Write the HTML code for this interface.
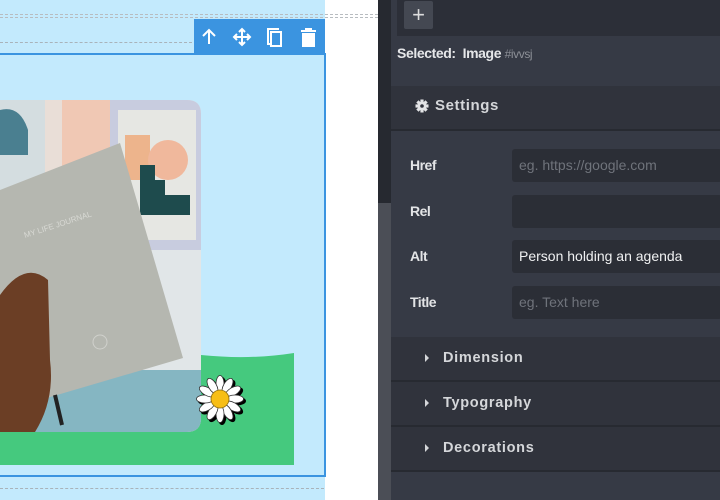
<!DOCTYPE html>
<html><head><style>
body{margin:0;width:720px;height:500px;overflow:hidden;background:#fff;font-family:"Liberation Sans",sans-serif;position:relative}
.a{position:absolute}
.lbl{position:absolute;left:410px;color:#e3e4e6;font-size:14px;font-weight:bold;letter-spacing:-0.5px}
.inp{position:absolute;left:512px;width:210px;height:33px;background:#2b2e36;border-radius:3px;font-size:14px;line-height:33px;padding-left:7px;box-sizing:border-box;color:#6f737b}
.sec{position:absolute;left:391px;width:329px;height:43px;background:#30333c;border-bottom:2px solid #272a31;color:#d5d7da;font-size:14.5px;font-weight:bold;letter-spacing:0.7px;line-height:43px}
.sec span{position:absolute;left:52px}
.sec i{position:absolute;left:34px;top:17px;border-left:4px solid #d5d7da;border-top:4px solid transparent;border-bottom:4px solid transparent}
</style></head><body>
<div class="a" style="left:0;top:0;width:325px;height:500px;background:#c3eafd"></div>
<div class="a" style="left:0;top:14px;width:378px;border-top:1px dashed #b8bcc0"></div>
<div class="a" style="left:0;top:17px;width:378px;border-top:1px dashed #b8bcc0"></div>
<div class="a" style="left:0;top:42px;width:192px;border-top:1px dashed #a9b3ba"></div>
<div class="a" style="left:0;top:488px;width:324px;border-top:1px dashed #a9b3ba"></div>
<div class="a" style="left:-2px;top:53px;width:328px;height:424px;border:2px solid #3b94e0;border-left:none;box-sizing:border-box"></div>
<svg class="a" style="left:0;top:100px" width="300" height="370">
<path d="M0 255 L201 255 Q250 260 294 253 L294 365 L0 365Z" fill="#45c97e"/>
<defs><clipPath id="c"><path d="M0 0 H187 Q201 0 201 14 V318 Q201 332 187 332 H0Z"/></clipPath></defs>
<g clip-path="url(#c)">
<rect width="201" height="332" fill="#e9ded7"/>
<rect x="0" y="0" width="45" height="170" fill="#d4dde0"/>
<rect x="62" y="0" width="50" height="120" fill="#f0c8b4"/>
<rect x="110" y="0" width="91" height="150" fill="#c8ccdf"/>
<rect x="118" y="10" width="78" height="130" fill="#e6e7e3"/>
<rect x="125" y="35" width="25" height="45" fill="#edb48c"/>
<circle cx="168" cy="60" r="20" fill="#f0b89c"/>
<path d="M140 65 H155 V80 H165 V95 H190 V115 H140Z" fill="#1e4b4d"/>
<path d="M0 10 Q20 5 28 30 V55 H0Z" fill="#4a7f90"/>
<rect x="0" y="150" width="201" height="130" fill="#e1e6e8"/>
<rect x="0" y="270" width="201" height="62" fill="#85b6c2"/>
<path d="M0 90 L120 43 L183 258 L40 300 L0 305Z" fill="#b5b7b0"/>
<text x="25" y="138" fill="#d8d9d4" font-size="8" transform="rotate(-18 25 138)">MY LIFE JOURNAL</text>
<circle cx="100" cy="242" r="7" fill="none" stroke="#d0d1cc"/>
<path d="M0 195 Q25 160 48 180 L50 260 Q55 300 35 332 L0 332Z" fill="#6b3e25"/>
<path d="M55 295 L62 325" stroke="#222" stroke-width="4"/>
</g>
</svg>
<svg class="a" style="left:192px;top:371px" width="56" height="56" viewBox="-28 -28 56 56">
<g fill="#000" transform="translate(2,2)">
<g id="p"><ellipse cx="0" cy="-15" rx="4.5" ry="9"/></g>
<use href="#p" transform="rotate(30)"/><use href="#p" transform="rotate(60)"/><use href="#p" transform="rotate(90)"/><use href="#p" transform="rotate(120)"/><use href="#p" transform="rotate(150)"/><use href="#p" transform="rotate(180)"/><use href="#p" transform="rotate(210)"/><use href="#p" transform="rotate(240)"/><use href="#p" transform="rotate(270)"/><use href="#p" transform="rotate(300)"/><use href="#p" transform="rotate(330)"/>
</g>
<g fill="#fff" stroke="#333" stroke-width="0.8">
<g id="q"><ellipse cx="0" cy="-15" rx="4" ry="8.5"/></g>
<use href="#q" transform="rotate(30)"/><use href="#q" transform="rotate(60)"/><use href="#q" transform="rotate(90)"/><use href="#q" transform="rotate(120)"/><use href="#q" transform="rotate(150)"/><use href="#q" transform="rotate(180)"/><use href="#q" transform="rotate(210)"/><use href="#q" transform="rotate(240)"/><use href="#q" transform="rotate(270)"/><use href="#q" transform="rotate(300)"/><use href="#q" transform="rotate(330)"/>
</g>
<circle r="9" fill="#f7be16" stroke="#8a6a10" stroke-width="0.8"/>
</svg>
<div class="a" style="left:194px;top:19px;width:131px;height:36px;background:#3b94e0"></div>
<svg class="a" style="left:194px;top:19px" width="131" height="36" fill="none" stroke="#fff" stroke-width="2">
<path d="M15 25 V11 M9 17 L15 11 L21 17"/>
<path d="M48 10 V26 M40 18 H56 M45 13 L48 10 L51 13 M45 23 L48 26 L51 23 M43 15 L40 18 L43 21 M53 15 L56 18 L53 21"/>
<path d="M76 25 H74 V10 H85"/><rect x="77" y="13" width="10" height="14"/>
<path d="M109 15 H120 V27 H109Z" fill="#fff"/><path d="M107 12 H122 M112 12 V10 H117 V12"/>
</svg>
<div class="a" style="left:378px;top:0;width:13px;height:500px;background:#4b4e56"></div>
<div class="a" style="left:378px;top:0;width:13px;height:203px;background:#262930"></div>
<div class="a" style="left:391px;top:0;width:329px;height:500px;background:#363a45"></div>
<div class="a" style="left:397px;top:0;width:323px;height:36px;background:#2c2f38"></div>
<div class="a" style="left:404px;top:1px;width:29px;height:28px;background:#444852;border-radius:2px;color:#ddd;font-size:22px;text-align:center;line-height:27px">+</div>
<div class="a" style="left:397px;top:45px;color:#e6e7e9;font-size:14px;font-weight:bold;letter-spacing:-0.4px">Selected:&nbsp; Image <span style="color:#8d9097;font-size:12px;font-weight:normal">#ivvsj</span></div>
<div class="a" style="left:391px;top:86px;width:329px;height:43px;background:#30333c;border-bottom:2px solid #272a31"></div>
<svg class="a" style="left:415px;top:99px" width="14" height="14" viewBox="-7 -7 14 14"><g fill="#e3e4e6"><circle r="4.5"/><g id="t"><rect x="-1.6" y="-6.5" width="3.2" height="3"/></g><use href="#t" transform="rotate(45)"/><use href="#t" transform="rotate(90)"/><use href="#t" transform="rotate(135)"/><use href="#t" transform="rotate(180)"/><use href="#t" transform="rotate(225)"/><use href="#t" transform="rotate(270)"/><use href="#t" transform="rotate(315)"/></g><circle r="1.8" fill="#30333c"/></svg>
<div class="a" style="left:435px;top:97px;color:#d5d7da;font-size:15px;font-weight:bold;letter-spacing:0.6px">Settings</div>
<div class="lbl" style="top:157px">Href</div>
<div class="inp" style="top:149px">eg. https://google.com</div>
<div class="lbl" style="top:203px">Rel</div>
<div class="inp" style="top:195px"></div>
<div class="lbl" style="top:248px">Alt</div>
<div class="inp" style="top:240px;color:#f0f1f2">Person holding an agenda</div>
<div class="lbl" style="top:294px">Title</div>
<div class="inp" style="top:286px">eg. Text here</div>
<div class="sec" style="top:337px"><i></i><span>Dimension</span></div>
<div class="sec" style="top:382px"><i></i><span>Typography</span></div>
<div class="sec" style="top:427px"><i></i><span>Decorations</span></div>
</body></html>
